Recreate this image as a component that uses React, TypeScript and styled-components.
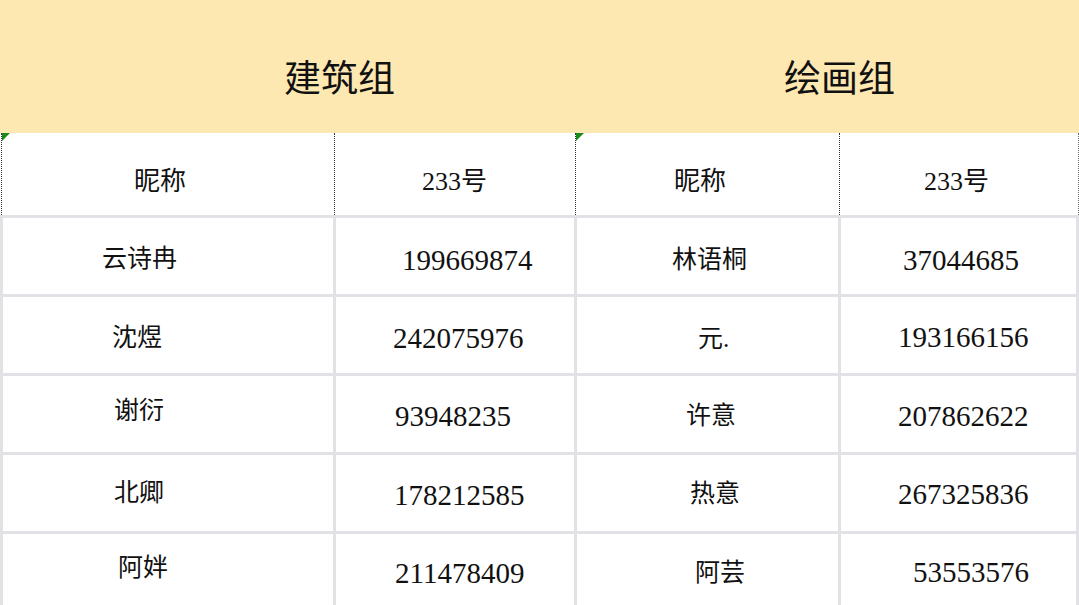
import React from 'react'
import styled, { createGlobalStyle } from 'styled-components'

const GlobalStyle = createGlobalStyle`
    html, body {
        margin: 0;
        padding: 0;
        background: #ffffff;
    }
    body {
        font-family: "Noto Sans CJK SC", "Noto Sans", sans-serif;
        color: #111;
    }
`

const COLS = '333px 241px 264px 241px'

const Sheet = styled.div`
    width: 1079px;
    height: 605px;
    overflow: hidden;
    background: #fff;
`
const Banner = styled.div`
    height: 133px;
    background: #fee8b1;
    display: grid;
    grid-template-columns: 574px 505px;
`
const GroupTitle = styled.div<{ $pad: number }>`
    display: flex;
    align-items: center;
    padding-left: ${p => p.$pad}px;
    padding-top: 18px;
    box-sizing: border-box;
    font-family: "Noto Sans CJK SC", sans-serif;
    font-size: 37px;
    color: #111;
`
const HeadRow = styled.div`
    height: 82px;
    display: grid;
    grid-template-columns: ${COLS};
`
const HeadCell = styled.div<{ $x: number; $flag?: boolean; $last?: boolean }>`
    position: relative;
    box-sizing: border-box;
    display: flex;
    align-items: center;
    padding-left: ${p => p.$x}px;
    padding-top: 8px;
    border-left: 1px dotted #333;
    margin-left: 1px;
    ${p => p.$last ? 'border-right: 1px dotted #666;' : ''}
    font-family: "Liberation Serif", "Noto Sans CJK SC", serif;
    font-size: 26px;
    &::before {
        content: '';
        display: ${p => p.$flag ? 'block' : 'none'};
        position: absolute;
        left: 0;
        top: 0;
        width: 0;
        height: 0;
        border-top: 8px solid #1a8a1a;
        border-right: 8px solid transparent;
    }
`
const Row = styled.div`
    height: 79px;
    box-sizing: border-box;
    border-top: 3px solid #e1e1e6;
    display: grid;
    grid-template-columns: ${COLS};
`
const Cell = styled.div<{ $x: number; $last?: boolean }>`
    box-sizing: border-box;
    display: flex;
    align-items: center;
    padding-left: ${p => p.$x}px;
    border-left: 3px solid #e1e1e6;
    ${p => p.$last ? 'border-right: 3px solid #e1e1e6;' : ''}
`
const Label = styled.span<{ $dy: number; $num?: boolean }>`
    margin-top: ${p => p.$dy * 2}px;
    white-space: nowrap;
    font-family: "Liberation Serif", "Noto Sans CJK SC", serif;
    font-size: ${p => p.$num ? '29px' : '25px'};
    line-height: 1;
    color: #111;
`

type CellData = { text: string; x: number; dy: number }

const colStart = [3, 336, 577, 841]

const rows: CellData[][] = [
    [
        { text: '云诗冉', x: 102, dy: 2 },
        { text: '199669874', x: 402, dy: 4 },
        { text: '林语桐', x: 672, dy: 3 },
        { text: '37044685', x: 903, dy: 4 },
    ],
    [
        { text: '沈煜', x: 112, dy: 2 },
        { text: '242075976', x: 393, dy: 3 },
        { text: '元.', x: 698, dy: 3 },
        { text: '193166156', x: 898, dy: 2 },
    ],
    [
        { text: '谢衍', x: 114, dy: -4 },
        { text: '93948235', x: 395, dy: 2 },
        { text: '许意', x: 686, dy: 1 },
        { text: '207862622', x: 898, dy: 2 },
    ],
    [
        { text: '北卿', x: 114, dy: -1 },
        { text: '178212585', x: 394, dy: 2 },
        { text: '热意', x: 690, dy: 0 },
        { text: '267325836', x: 898, dy: 1 },
    ],
    [
        { text: '阿姅', x: 118, dy: -5 },
        { text: '211478409', x: 395, dy: 1 },
        { text: '阿芸', x: 695, dy: 0 },
        { text: '53553576', x: 913, dy: 0 },
    ],
]

const heads = [
    { text: '昵称', x: 135, flag: true },
    { text: '233号', x: 423 },
    { text: '昵称', x: 675, flag: true },
    { text: '233号', x: 925 },
]

const isNum = (s: string) => /^\d+$/.test(s)

const App = () => {
    return (
        <Sheet>
            <GlobalStyle />
            <Banner>
                <GroupTitle $pad={284}>建筑组</GroupTitle>
                <GroupTitle $pad={784 - 574}>绘画组</GroupTitle>
            </Banner>
            <HeadRow>
                {heads.map((h, i) => (
                    <HeadCell key={i} $x={h.x - colStart[i]} $flag={h.flag} $last={i === 3}>
                        {h.text}
                    </HeadCell>
                ))}
            </HeadRow>
            {rows.map((r, ri) => (
                <Row key={ri}>
                    {r.map((c, ci) => (
                        <Cell key={ci} $x={c.x - colStart[ci]} $last={ci === 3}>
                            <Label $dy={c.dy} $num={isNum(c.text)}>{c.text}</Label>
                        </Cell>
                    ))}
                </Row>
            ))}
        </Sheet>
    )
}

export default App
